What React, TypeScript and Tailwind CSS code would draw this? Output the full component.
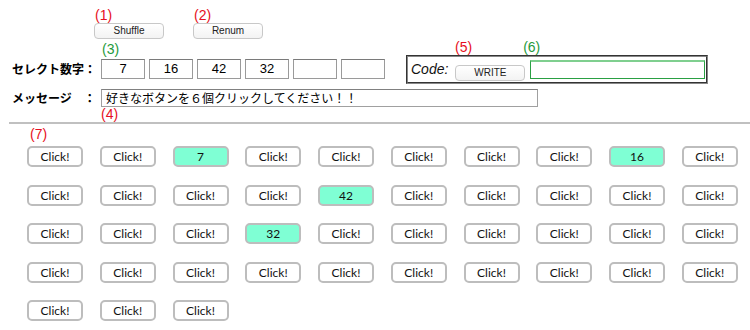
const selected = ["7", "16", "42", "32", "", ""];

const cells: string[] = Array.from({ length: 43 }, () => "Click!");
cells[2] = "7";
cells[8] = "16";
cells[14] = "42";
cells[23] = "32";

function Mark({ n, green }: { n: number; green?: boolean }) {
  return (
    <div
      className={`h-[16px] text-[14px] leading-[16px] font-['Liberation_Sans',Arial,sans-serif] ${
        green ? "text-[#1f9a3c]" : "text-[#e60f22]"
      }`}
    >
      ({n})
    </div>
  );
}

function SmallButton({ label, w }: { label: string; w: string }) {
  return (
    <button
      className={`${w} h-[16px] rounded-[4px] border border-[#c8c8c8] bg-gradient-to-b from-white to-[#f3f3f3] text-[10px] leading-[14px] text-[#222] font-['Liberation_Sans',Arial,sans-serif]`}
    >
      {label}
    </button>
  );
}

export default function App() {
  const jp = "font-['Noto_Sans_CJK_JP','Noto_Sans',sans-serif]";
  return (
    <div className="w-[750px] h-[330px] overflow-hidden bg-white text-black">
      {/* top buttons */}
      <div className="flex pt-[7px] pl-[94px]">
        <div className="flex flex-col">
          <div className="pl-[1px]">
            <Mark n={1} />
          </div>
          <SmallButton label="Shuffle" w="w-[70px]" />
        </div>
        <div className="flex flex-col ml-[29px]">
          <div className="pl-[1px]">
            <Mark n={2} />
          </div>
          <SmallButton label="Renum" w="w-[70px]" />
        </div>
      </div>

      {/* select + code */}
      <div className="flex -mt-[1px]">
        <div className="flex flex-col pt-[3px]">
          <div className="pl-[102px]">
            <Mark n={3} green />
          </div>
          <div className="flex items-center mt-[2px]">
            <div className={`w-[101px] pl-[12px] text-[12px] font-bold ${jp}`}>セレクト数字：</div>
            <div className="flex gap-[4px]">
              {selected.map((s, i) => (
                <div
                  key={i}
                  className="w-[44px] h-[20px] border border-[#9a9a9a] border-t-[#7a7a7a] flex items-center justify-center text-[13px] font-['Liberation_Sans',Arial,sans-serif]"
                >
                  {s}
                </div>
              ))}
            </div>
          </div>
        </div>
        <div className="flex flex-col ml-[21px] mt-[1px]">
          <div className="flex">
            <div className="ml-[49px]">
              <Mark n={5} />
            </div>
            <div className="ml-[51px]">
              <Mark n={6} green />
            </div>
          </div>
          <div className="w-[302px] h-[29px] border-2 [border-style:groove] border-[#888] flex items-center pl-[3px]">
            <span className="text-[14px] italic text-[#111] font-['Liberation_Sans',Arial,sans-serif]">Code:</span>
            <div className="ml-[7px] mt-[1px]">
              <SmallButton label="WRITE" w="w-[70px]" />
            </div>
            <div className="ml-[5px] w-[175px] h-[19px] border border-[#2aa043] border-t-2 border-t-[#7fcf8f]" />
          </div>
        </div>
      </div>

      {/* message */}
      <div className="flex items-center mt-[5px]">
        <div className={`w-[101px] pl-[12px] text-[12px] font-bold ${jp}`}>メッセージ　：</div>
        <div className={`w-[437px] h-[18px] border border-[#a0a0a0] border-t-[#808080] pl-[4px] text-[12px] leading-[16px] ${jp}`}>
          好きなボタンを６個クリックしてください！！
        </div>
      </div>
      <div className="pl-[101px] -mt-[1px]">
        <Mark n={4} />
      </div>

      <div className="ml-[9px] h-[2px] bg-[#c0c0c0]" />

      <div className="pl-[30px] mt-[2px]">
        <Mark n={7} />
      </div>

      {/* grid of buttons */}
      <div className="grid grid-cols-[repeat(10,56px)] gap-x-[16.75px] gap-y-[17.5px] pl-[27px] mt-[4px]">
        {cells.map((c, i) => (
          <button
            key={i}
            className={`w-[56px] h-[21px] rounded-[5px] border-2 border-[#bdbdbd] text-[12px] leading-[17px] text-[#111] font-['Lato',sans-serif] ${
              c === "Click!" ? "bg-white" : "bg-[#7fffd4]"
            }`}
          >
            {c}
          </button>
        ))}
      </div>
    </div>
  );
}
